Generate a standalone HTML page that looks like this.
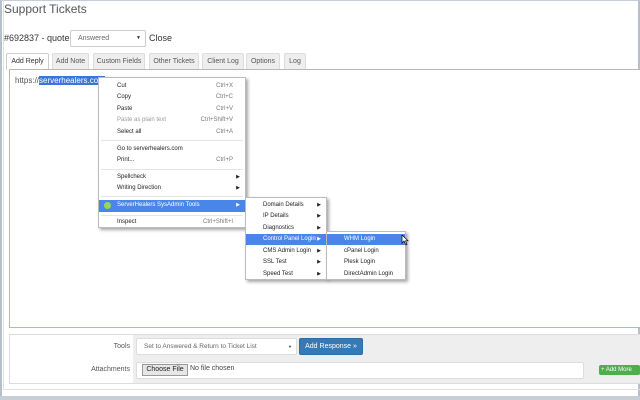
<!DOCTYPE html>
<html><head><meta charset="utf-8"><style>
*{box-sizing:border-box;margin:0;padding:0}
body{width:640px;height:400px;overflow:hidden;background:#fff;font-family:"Liberation Sans",sans-serif;color:#333;position:relative}
.a{position:absolute}
.frame{left:0;top:0;width:640px;height:398px;border-left:2px solid #b6c0cc;border-top:1px solid #c5ccd6;border-right:2px solid #b6c0cc}
.bot{left:0;top:396px;width:640px;height:4px;background:#c9ced6}
.inner{left:3px;top:0;width:640px;height:390px;border-left:1px solid #e2e2e2;border-bottom:1px solid #e2e2e2}
.tab{top:53px;height:16px;border:1px solid #ddd;border-bottom:none;background:#eee;font-size:7px;color:#555;text-align:center;line-height:15px;border-radius:2px 2px 0 0}
.ta{left:9px;top:69px;width:640px;height:259px;border:1px solid #8fc1ea;background:#fff}
.menu{background:#fff;border:1px solid #bbb;box-shadow:2px 2px 3px rgba(0,0,0,.35);font-size:6px;color:#222}
.it{position:absolute;left:0;right:0;height:11px;line-height:11px}
.it span.s{position:absolute;right:12px;color:#777}
.ar{position:absolute;right:5px;font-size:5px}
.hl{background:#4a86e8;color:#fff}
.sep{position:absolute;left:2px;right:2px;height:1px;background:#e4e4e4}
</style></head><body>
<div class="a frame"></div>
<div class="a inner"></div>
<div class="a bot"></div>
<div class="a" style="left:4px;top:2px;font-size:12px;color:#555">Support Tickets</div>
<div class="a" style="left:4px;top:33px;font-size:9px;color:#333">#692837 - quote</div>
<div class="a" style="left:70px;top:30px;width:76px;height:17px;border:1px solid #ccc;border-radius:2px;font-size:7px;color:#666;line-height:15px;padding-left:7px">Answered<span style="position:absolute;right:4px;font-size:5px;color:#333">▼</span></div>
<div class="a" style="left:149px;top:33px;font-size:9px;color:#333">Close</div>
<div class="a tab" style="left:6px;width:43px;background:#fff;border-color:#ccc;height:17px;color:#333">Add Reply</div>
<div class="a tab" style="left:52px;width:37px">Add Note</div>
<div class="a tab" style="left:93px;width:52px">Custom Fields</div>
<div class="a tab" style="left:149px;width:50px">Other Tickets</div>
<div class="a tab" style="left:202px;width:42px">Client Log</div>
<div class="a tab" style="left:246px;width:34px">Options</div>
<div class="a tab" style="left:284px;width:22px">Log</div>
<div class="a ta"></div>
<div class="a" style="left:15px;top:76px;font-size:8px;color:#555">https://<span style="background:#3b75d9;color:#fff">serverhealers.com</span></div>

<div class="a menu" style="left:98px;top:77px;width:148px;height:151px">
<div class="it" style="top:3px;padding-left:18px">Cut<span class="s">Ctrl+X</span></div>
<div class="it" style="top:14px;padding-left:18px">Copy<span class="s">Ctrl+C</span></div>
<div class="it" style="top:26px;padding-left:18px">Paste<span class="s">Ctrl+V</span></div>
<div class="it" style="top:37px;padding-left:18px;color:#999">Paste as plain text<span class="s">Ctrl+Shift+V</span></div>
<div class="it" style="top:49px;padding-left:18px">Select all<span class="s">Ctrl+A</span></div>
<div class="sep" style="top:62px"></div>
<div class="it" style="top:66px;padding-left:18px">Go to serverhealers.com</div>
<div class="it" style="top:77px;padding-left:18px">Print...<span class="s">Ctrl+P</span></div>
<div class="sep" style="top:91px"></div>
<div class="it" style="top:94px;padding-left:18px">Spellcheck<span class="ar">▶</span></div>
<div class="it" style="top:105px;padding-left:18px">Writing Direction<span class="ar">▶</span></div>
<div class="sep" style="top:118px"></div>
<div class="it hl" style="top:122px;height:12px;padding-left:18px"><span style="position:absolute;left:5px;top:2px;width:7px;height:7px;border-radius:50%;background:#9bd45a"></span>ServerHealers SysAdmin Tools<span class="ar">▶</span></div>
<div class="sep" style="top:137px"></div>
<div class="it" style="top:139px;padding-left:18px">Inspect<span class="s">Ctrl+Shift+I</span></div>
</div>

<div class="a menu" style="left:245px;top:197px;width:82px;height:83px">
<div class="it" style="top:2px;padding-left:17px">Domain Details<span class="ar">▶</span></div>
<div class="it" style="top:13px;padding-left:17px">IP Details<span class="ar">▶</span></div>
<div class="it" style="top:25px;padding-left:17px">Diagnostics<span class="ar">▶</span></div>
<div class="it hl" style="top:36px;padding-left:17px">Control Panel Login<span class="ar">▶</span></div>
<div class="it" style="top:48px;padding-left:17px">CMS Admin Login<span class="ar">▶</span></div>
<div class="it" style="top:59px;padding-left:17px">SSL Test<span class="ar">▶</span></div>
<div class="it" style="top:71px;padding-left:17px">Speed Test<span class="ar">▶</span></div>
</div>
<div class="a menu" style="left:326px;top:231px;width:80px;height:49px">
<div class="it hl" style="top:2px;padding-left:17px">WHM Login</div>
<div class="it" style="top:14px;padding-left:17px">cPanel Login</div>
<div class="it" style="top:25px;padding-left:17px">Plesk Login</div>
<div class="it" style="top:37px;padding-left:17px">DirectAdmin Login</div>
</div>
<svg class="a" style="left:401px;top:235px" width="9" height="11" viewBox="0 0 9 11"><path d="M1 0 L1 8 L3 6 L5 10 L6 9.5 L4.5 5.8 L7 5.8 Z" fill="#fff" stroke="#000" stroke-width=".7"/></svg>

<div class="a" style="left:9px;top:334px;width:640px;height:50px;border:1px solid #ddd;background:#fff"></div>
<div class="a" style="left:133px;top:335px;width:507px;height:48px;background:#eee"></div>
<div class="a" style="left:0;top:343px;width:130px;text-align:right;font-size:7px;color:#555">Tools</div>
<div class="a" style="left:0;top:366px;width:130px;text-align:right;font-size:7px;color:#555">Attachments</div>
<div class="a" style="left:136px;top:338px;width:161px;height:17px;background:#fff;border:1px solid #ddd;border-radius:2px;font-size:6.5px;color:#666;line-height:15px;padding-left:7px">Set to Answered &amp; Return to Ticket List<span style="position:absolute;right:4px;font-size:4px;color:#333">▼</span></div>
<div class="a" style="left:299px;top:338px;width:64px;height:17px;background:#337ab7;border:1px solid #2e6da4;border-radius:2px;color:#fff;font-size:7px;line-height:15px;text-align:center">Add Response »</div>
<div class="a" style="left:136px;top:362px;width:448px;height:17px;background:#fff;border:1px solid #ddd;border-radius:2px"></div>
<div class="a" style="left:142px;top:364px;width:46px;height:12px;background:#e6e6e6;border:1px solid #999;font-size:7px;line-height:10px;text-align:center;color:#222">Choose File</div>
<div class="a" style="left:190px;top:365px;font-size:7px;color:#444">No file chosen</div>
<div class="a" style="left:599px;top:365px;width:41px;height:10px;background:#4cae4c;border-radius:2px;color:#fff;font-size:6px;line-height:10px;padding-left:2px;white-space:nowrap">+ Add More</div>
</body></html>
